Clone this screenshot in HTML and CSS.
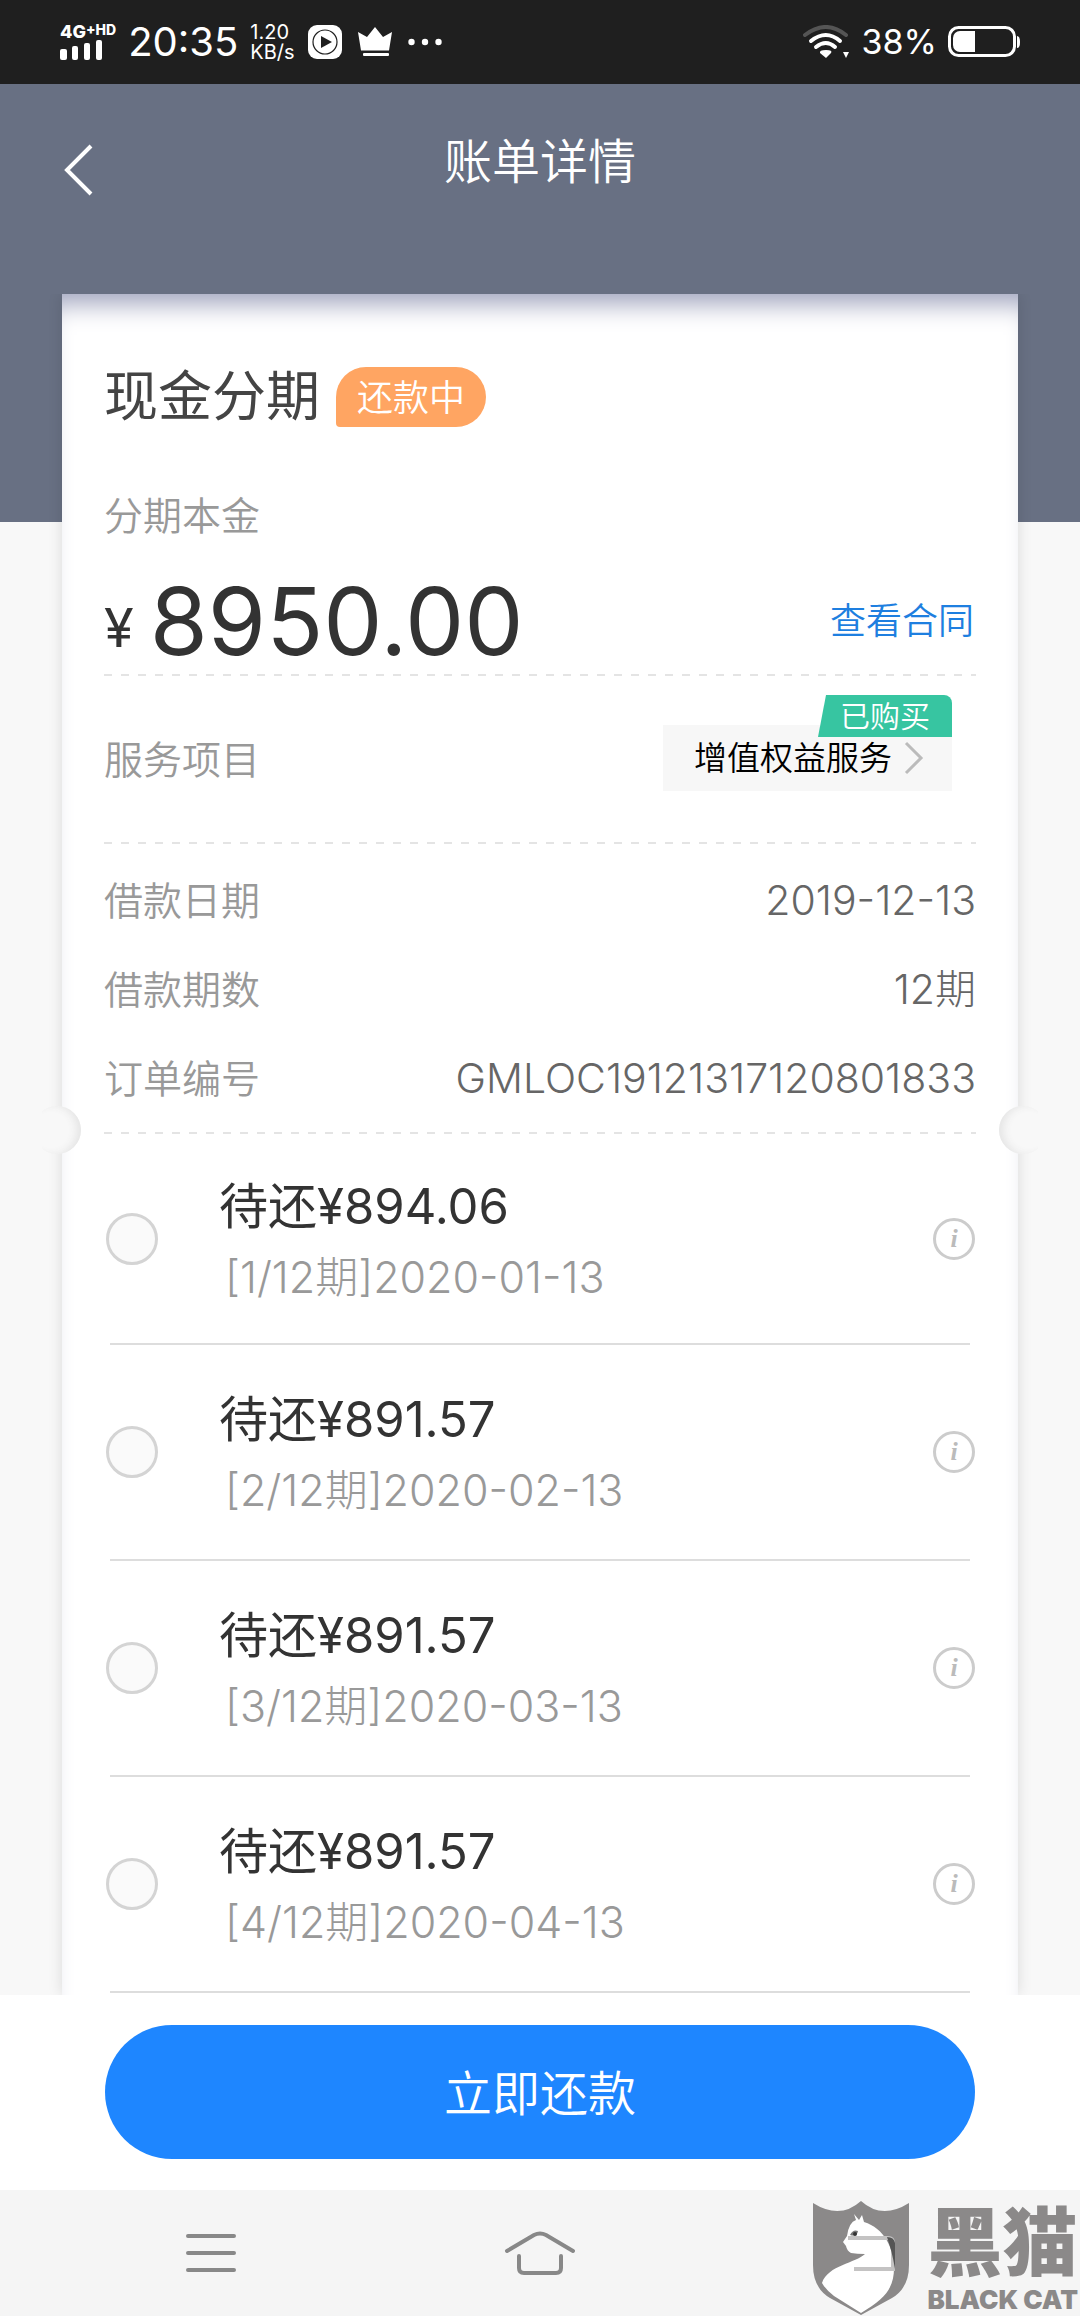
FILE: index.html
```html
<!DOCTYPE html>
<html lang="zh-CN">
<head>
<meta charset="utf-8">
<meta name="viewport" content="width=device-width, initial-scale=1">
<title>账单详情</title>
<link rel="stylesheet" href="styles.css">
</head>
<body>
<div class="status-bar">
  <div class="status-left">
    <div class="signal">
      <span class="signal-type">4G<sup>+HD</sup></span>
      <svg width="44" height="20" viewBox="0 0 44 20" fill="#fff" aria-hidden="true">
        <rect x="0" y="9" width="7" height="11" rx="2"/><rect x="12" y="6" width="6" height="14" rx="2"/><rect x="24" y="3" width="6" height="17" rx="2"/><rect x="36" y="0" width="6" height="20" rx="2"/>
      </svg>
    </div>
    <span class="clock">20:35</span>
    <span class="net-speed">1.20<br>KB/s</span>
    <svg class="icon-play" width="34" height="34" viewBox="0 0 34 34" aria-hidden="true">
      <rect width="34" height="34" rx="9" fill="#fff"/><circle cx="17" cy="17" r="12" fill="none" stroke="#1f1f1f" stroke-width="1.2"/><path d="M13 11v12l11-6z" fill="#1f1f1f"/>
    </svg>
    <svg class="icon-crown" width="34" height="30" viewBox="0 0 34 30" fill="#fff" aria-hidden="true">
      <path d="M0 5l9 5 8-10 8 10 9-5-3 18.500H3z"/><rect x="5" y="26" width="26" height="3" rx="1"/>
    </svg>
    <svg width="34" height="8" viewBox="0 0 34 8" fill="#fff" aria-hidden="true">
      <circle cx="3.500" cy="4" r="3.200"/><circle cx="17" cy="4" r="3.200"/><circle cx="30.500" cy="4" r="3.200"/>
    </svg>
  </div>
  <div class="status-right">
    <svg width="48" height="34" viewBox="0 0 48 34" fill="none" stroke="#fff" stroke-width="4" stroke-linecap="round" aria-hidden="true">
      <path d="M2 10Q23-6 43 10" stroke="#555"/><path d="M8 16Q23 4 37 16"/><path d="M13 22Q23 14 32 22"/>
      <path d="M23 25Q30 25 28 28L23 33L17 28Q16 25 23 25z" fill="#fff" stroke="none"/><path d="M40 27h6l-3 6z" fill="#fff" stroke="none"/>
    </svg>
    <span class="battery-text">38%</span>
    <svg width="73" height="32" viewBox="0 0 73 32" aria-hidden="true">
      <rect x="1.500" y="1.500" width="65" height="28" rx="9" fill="none" stroke="#fff" stroke-width="3"/><path d="M12 5h15v21H12a7 7 0 0 1-7-7v-7a7 7 0 0 1 7-7z" fill="#fff"/><path d="M69 10q3 0 3 6t-3 6z" fill="#fff"/>
    </svg>
  </div>
</div>

<main class="page">
  <header class="top-bar">
    <button class="back-button" type="button" aria-label="返回">
      <svg width="30" height="52" viewBox="0 0 30 52" fill="none" stroke="#fff" stroke-width="4" aria-hidden="true"><path d="M27 2L3 26l24 24"/></svg>
    </button>
    <h1 class="page-title">账单详情</h1>
  </header>

  <article class="card">
    <section class="summary">
      <div class="product">
        <h2 class="product-name">现金分期</h2>
        <span class="status-tag">还款中</span>
      </div>
      <p class="label principal-label">分期本金</p>
      <div class="amount-row dashed">
        <p class="amount"><span class="currency">¥</span>8950.00</p>
        <a class="contract-link" href="#contract">查看合同</a>
      </div>
      <div class="service-row dashed">
        <span class="label">服务项目</span>
        <a class="service-chip" href="#service">
          <span class="bought-tag">已购买</span>
          增值权益服务
          <svg width="20" height="34" viewBox="0 0 20 34" fill="none" stroke="#bbb" stroke-width="3" aria-hidden="true"><path d="M2 2l15 15L2 32"/></svg>
        </a>
      </div>
      <dl class="details dashed">
        <div class="detail"><dt class="label">借款日期</dt><dd>2019-12-13</dd></div>
        <div class="detail"><dt class="label">借款期数</dt><dd>12期</dd></div>
        <div class="detail"><dt class="label">订单编号</dt><dd>GMLOC19121317120801833</dd></div>
      </dl>
    </section>

    <ul class="bills">
      <li class="bill">
        <input class="bill-check" type="checkbox" id="bill-1">
        <label class="bill-text" for="bill-1"><span class="bill-due">待还¥894.06</span><span class="bill-date">[1/12期]2020-01-13</span></label>
        <button class="info" type="button" aria-label="详情"><span>i</span></button>
      </li>
      <li class="bill">
        <input class="bill-check" type="checkbox" id="bill-2">
        <label class="bill-text" for="bill-2"><span class="bill-due">待还¥891.57</span><span class="bill-date">[2/12期]2020-02-13</span></label>
        <button class="info" type="button" aria-label="详情"><span>i</span></button>
      </li>
      <li class="bill">
        <input class="bill-check" type="checkbox" id="bill-3">
        <label class="bill-text" for="bill-3"><span class="bill-due">待还¥891.57</span><span class="bill-date">[3/12期]2020-03-13</span></label>
        <button class="info" type="button" aria-label="详情"><span>i</span></button>
      </li>
      <li class="bill">
        <input class="bill-check" type="checkbox" id="bill-4">
        <label class="bill-text" for="bill-4"><span class="bill-due">待还¥891.57</span><span class="bill-date">[4/12期]2020-04-13</span></label>
        <button class="info" type="button" aria-label="详情"><span>i</span></button>
      </li>
    </ul>
  </article>
</main>

<footer class="pay-bar">
  <button class="pay-button" type="button">立即还款</button>
</footer>

<nav class="system-nav">
  <button class="nav-button" type="button" aria-label="最近任务">
    <svg width="50" height="40" viewBox="0 0 50 40" fill="none" stroke="#888" stroke-width="4" stroke-linecap="round" aria-hidden="true"><path d="M2 3h46M2 20h46M2 37h46"/></svg>
  </button>
  <button class="nav-button" type="button" aria-label="主页">
    <svg width="72" height="44" viewBox="0 0 72 44" fill="none" stroke="#888" stroke-width="4" stroke-linecap="round" aria-hidden="true"><path d="M3 20L30 4q6-3 12 0l27 16M15 25v12q0 5 5 5h32q5 0 5-5V25"/></svg>
  </button>
  <button class="nav-button" type="button" aria-label="返回">
    <svg width="52" height="36" viewBox="0 0 52 36" fill="none" stroke="#888" stroke-width="4" stroke-linecap="round" aria-hidden="true"><path d="M4 2h38q6 0 6 6v20q0 6-6 6H10"/></svg>
  </button>
  <div class="watermark">
    <svg width="98" height="116" viewBox="0 0 98 116" aria-hidden="true">
      <path d="M1 3Q28 20 49 1Q70 20 97 3V65Q97 88 80 98L49 115L18 98Q1 88 1 65z" fill="#8b8989"/>
      <path d="M42 14l5 6 3-5 2 7C72 28 82 48 82 68C82 88 73 99 49 113L22 96Q14 90 10 83C16 65 44 63 53 54Q45 54 39 53Q35 51 34 46L31 42L35 36Q37 22 44 20z" fill="#fff"/>
      <path d="M38 35q3-6 8-4-1 6-8 4z" fill="#777"/><circle cx="43" cy="34" r="2" fill="#333"/>
      <path d="M36 38h40q5 0 5 5v26H42" fill="none" stroke="#c4c3c3" stroke-width="4"/>
      <path d="M75 37q7 0 8 6v26q-3-18-8-32z" fill="#555"/>
    </svg>
    <div class="brand"><span class="brand-name">黑猫</span><span class="brand-latin">BLACK CAT</span></div>
  </div>
</nav>
</body>
</html>
```
FILE: styles.css
```css
* {
  box-sizing: border-box;
}

body {
  margin: 0;
  min-height: 100vh;
  display: flex;
  flex-direction: column;
  background: #f8f8f8;
  color: #333;
  font-family: Inter, "Noto Sans CJK SC", sans-serif;
  font-weight: 350;
}

h1, h2, p, dl, dd, ul {
  margin: 0;
  padding: 0;
}

button {
  margin: 0;
  padding: 0;
  border: 0;
  background: none;
  font: inherit;
}

a {
  text-decoration: none;
}

svg {
  display: block;
  flex: none;
}

/* status bar */
.status-bar {
  height: 84px;
  padding: 0 59px 0 60px;
  display: flex;
  justify-content: space-between;
  align-items: center;
  background: #1f1f1f;
  color: #fff;
  font-weight: 400;
}

.status-left,
.status-right {
  display: flex;
  align-items: center;
}

.status-right {
  gap: 11px;
}

.signal-type {
  display: flex;
  font-size: 18px;
  line-height: 16px;
  font-weight: 800;
}

.signal-type sup {
  font-size: 14px;
  line-height: 12px;
}

.clock {
  margin-left: 12px;
  font-size: 40px;
  line-height: 48px;
}

.net-speed {
  margin-left: 12px;
  font-size: 20px;
  line-height: 20px;
}

.icon-play {
  margin-left: 13px;
}

.icon-crown {
  margin: 0 16px;
}

.battery-text {
  font-size: 34px;
  line-height: 40px;
}

/* page */
.page {
  flex: 1;
  display: flex;
  flex-direction: column;
  padding: 0 62px;
  background: linear-gradient(#687083 438px, #f8f8f8 438px);
}

.top-bar {
  height: 210px;
  padding-top: 48px;
  display: grid;
  grid-template-columns: 60px 1fr 60px;
  align-items: start;
}

.back-button {
  width: 60px;
  padding: 12px 0 0 2px;
}

.page-title {
  color: #fff;
  font-size: 48px;
  line-height: 60px;
  font-weight: 350;
  text-align: center;
}

.card {
  flex: 1;
  padding-top: 73px;
  background: #fff;
  box-shadow: inset 0 26px 26px -16px #a0a4be, 0 0 14px rgba(0, 0, 0, 0.12);
  clip-path: inset(0 -20px);
}

.summary {
  padding: 0 42px;
}

.label {
  color: #999;
  font-size: 39px;
  line-height: 54px;
}

.dashed {
  background: repeating-linear-gradient(90deg, #e4e4e4 0 8px, transparent 8px 17px) bottom / 100% 2px no-repeat;
}

.product {
  display: flex;
  align-items: center;
  gap: 16px;
}

.product-name {
  font-size: 54px;
  line-height: 60px;
  font-weight: 400;
  color: #444;
}

.status-tag {
  padding: 2px 21px 0;
  border-radius: 30px 30px 30px 4px;
  background: #ffa562;
  color: #fff;
  font-size: 36px;
  line-height: 58px;
}

.principal-label {
  margin-top: 62px;
}

.amount-row {
  height: 133px;
  padding-top: 22px;
  display: flex;
  justify-content: space-between;
  align-items: center;
}

.amount {
  display: flex;
  align-items: center;
  gap: 16px;
  font-size: 94px;
  line-height: 110px;
  font-weight: 400;
}

.currency {
  padding-top: 14px;
  font-size: 54px;
  line-height: 60px;
}

.contract-link {
  margin-right: 2px;
  color: #1e7fe0;
  font-size: 36px;
  line-height: 48px;
}

.service-row {
  height: 168px;
  display: flex;
  justify-content: space-between;
  align-items: center;
}

.service-chip {
  position: relative;
  margin: 0 24px 4px 0;
  padding: 0 28px 0 31px;
  display: flex;
  align-items: center;
  gap: 12px;
  background: #f7f7f7;
  color: #000;
  font-size: 33px;
  line-height: 66px;
}

.bought-tag {
  position: absolute;
  right: 0;
  top: -30px;
  padding: 0 22px;
  border-radius: 8px 8px 0 0;
  background: #37c5a1;
  clip-path: polygon(8px 0, 100% 0, 100% 100%, 0 100%);
  color: #fff;
  font-size: 30px;
  line-height: 42px;
}

.details {
  position: relative;
  padding: 12px 0 11px;
}

/* ticket notches on both card edges */
.details::before,
.details::after {
  content: "";
  position: absolute;
  bottom: -20px;
  width: 48px;
  height: 48px;
  border-radius: 50%;
  background: #f8f8f8;
}

.details::before {
  left: -71px;
  box-shadow: inset -6px 0 8px -2px #e4e4e4;
}

.details::after {
  right: -71px;
  box-shadow: inset 6px 0 8px -2px #e4e4e4;
}

.detail {
  display: flex;
  justify-content: space-between;
  align-items: center;
}

.detail dt,
.detail dd {
  line-height: 89px;
}

.detail dd {
  color: #666;
  font-size: 41px;
  font-weight: 300;
}

/* instalments */
.bills {
  padding: 0 48px;
  list-style: none;
}

.bill {
  height: 216px;
  display: flex;
  align-items: center;
  border-bottom: 2px solid #ddd;
}

.bill:first-child {
  height: 211px;
}

.bill-check {
  appearance: none;
  width: 52px;
  height: 52px;
  margin: 0 0 0 -4px;
  border: 3px solid #d4d4d4;
  border-radius: 50%;
  background: #fafafa;
}

.bill-text {
  flex: 1;
  padding: 10px 0 0 61px;
  display: flex;
  flex-direction: column;
}

.bill-due {
  font-size: 49px;
  line-height: 66px;
  font-weight: 400;
}

.bill-date {
  padding-left: 6px;
  color: #999;
  font-size: 43px;
  line-height: 74px;
  font-weight: 300;
}

.info {
  width: 42px;
  height: 42px;
  margin-right: -5px;
  border: 3px solid #ccc;
  border-radius: 50%;
  color: #bbb;
  font: italic 700 26px/36px "Liberation Serif", serif;
}

/* pay bar */
.pay-bar {
  padding: 30px 105px 31px;
  background: #fff;
}

.pay-button {
  width: 100%;
  padding-top: 4px;
  border-radius: 67px;
  background: #1e86ff;
  color: #fff;
  font-size: 48px;
  line-height: 130px;
}

/* system navigation */
.system-nav {
  position: relative;
  height: 126px;
  padding: 0 46px;
  display: grid;
  grid-template-columns: repeat(3, 1fr);
  justify-items: center;
  align-items: center;
  background: #f5f5f5;
}

.watermark {
  position: absolute;
  right: 2px;
  bottom: 0;
  display: flex;
  gap: 18px;
  color: #8b8989;
}

.brand {
  display: flex;
  flex-direction: column;
  font-weight: 900;
}

.brand-name {
  font-size: 75px;
  line-height: 86px;
}

.brand-latin {
  font-size: 26px;
  line-height: 28px;
}
```
